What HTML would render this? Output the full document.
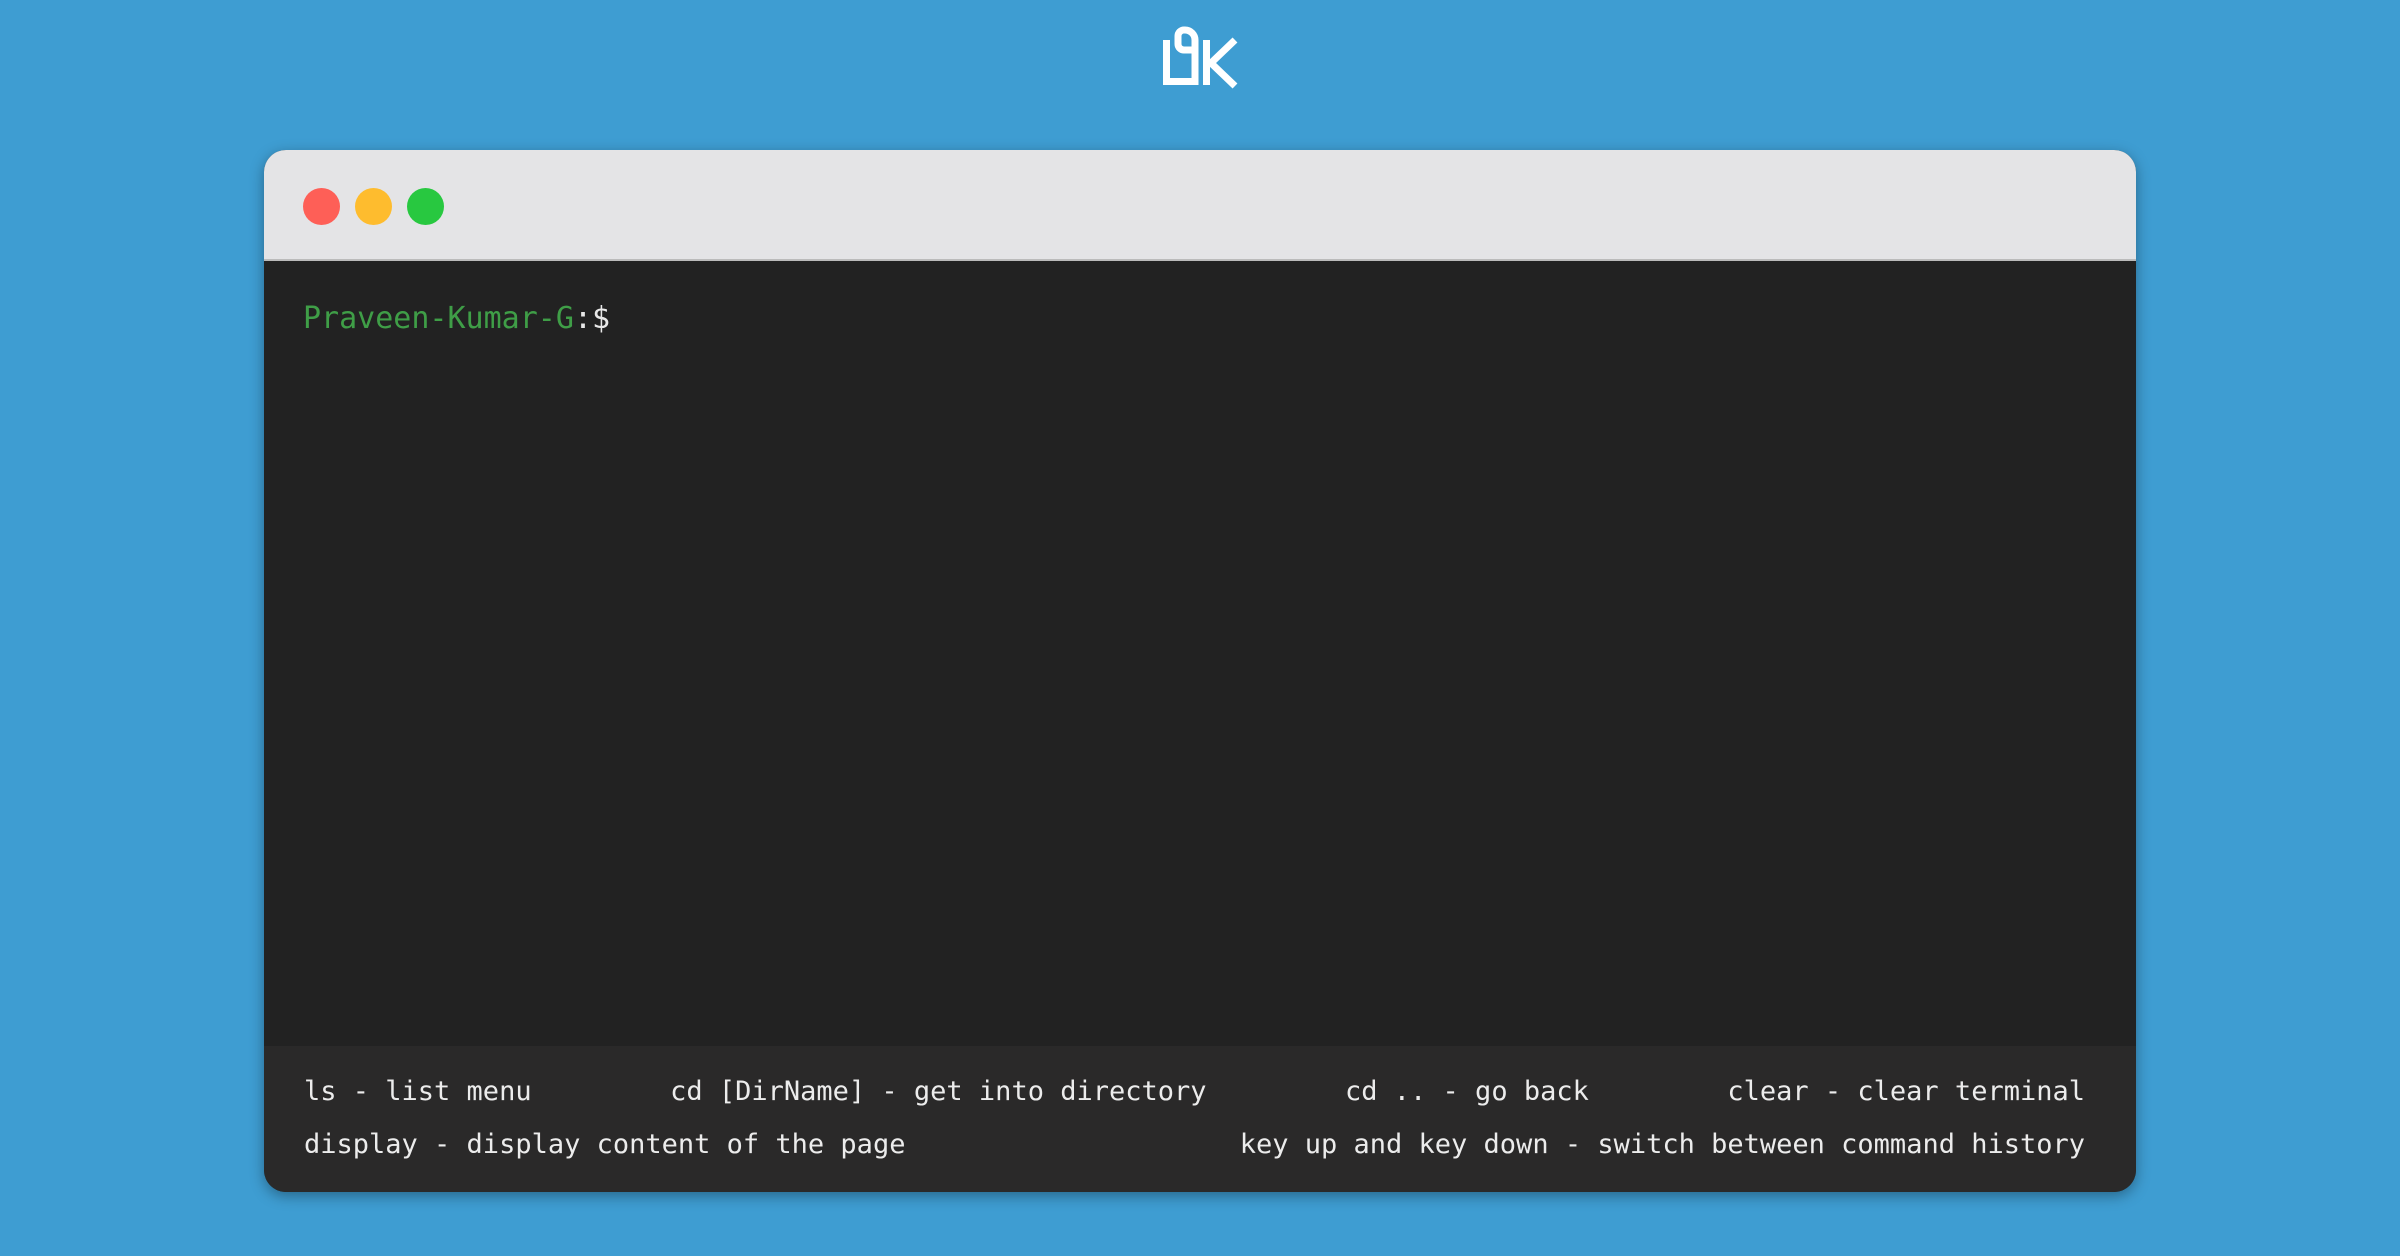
<!DOCTYPE html>
<html><head><meta charset="utf-8"><style>
html,body{margin:0;padding:0;}
body{width:2400px;height:1256px;background:#3e9dd2;position:relative;overflow:hidden;font-family:"DejaVu Sans Mono","Liberation Mono",monospace;}
.win{position:absolute;left:264px;top:150px;width:1872px;height:1042px;border-radius:22px;overflow:hidden;box-shadow:0 4px 14px rgba(0,0,0,0.35);background:#222;}
.bar{position:absolute;left:0;top:0;right:0;height:109px;background:#e4e4e6;border-bottom:2px solid #bbb;}
.dot{position:absolute;top:38px;width:37px;height:37px;border-radius:50%;}
.term{position:absolute;left:0;top:111px;right:0;height:785px;background:#222;}
.prompt{position:absolute;left:39px;font-size:30px;color:#3f9e47;line-height:36px;}
.prompt span{color:#e8e8e8;}
.help{position:absolute;left:0;right:0;top:896px;bottom:0;background:#2a2929;color:#ececec;font-size:27px;}
.row{position:absolute;left:40px;right:51px;display:flex;justify-content:space-between;white-space:pre;}
</style></head><body>
<svg style="position:absolute;left:0;top:0" width="2400" height="120">
<g fill="none" stroke="#fff" stroke-width="7" stroke-linejoin="miter">
<path d="M1166.5,40 V81.5 H1195 V40 a10,10 0 0 0 -10,-10 h-1 a6,6 0 0 0 -6,6 v8 a6,6 0 0 0 6,6 h11"/>
<path d="M1206.5,40 V85"/>
<path d="M1235,40 L1211,63 L1235,86"/>
</g></svg>
<div class="win">
<div class="bar">
<div class="dot" style="left:39px;background:#fe5f57;"></div>
<div class="dot" style="left:91px;background:#febc2e;"></div>
<div class="dot" style="left:143px;background:#28c840;"></div>
</div>
<div class="term"><div class="prompt" style="top:40px">Praveen-Kumar-G<span>:$</span></div></div>
<div class="help">
<div class="row" style="top:30px"><span>ls - list menu</span><span>cd [DirName] - get into directory</span><span>cd .. - go back</span><span>clear - clear terminal</span></div>
<div class="row" style="top:83px"><span>display - display content of the page</span><span>key up and key down - switch between command history</span></div>
</div>
</div>
</body></html>
